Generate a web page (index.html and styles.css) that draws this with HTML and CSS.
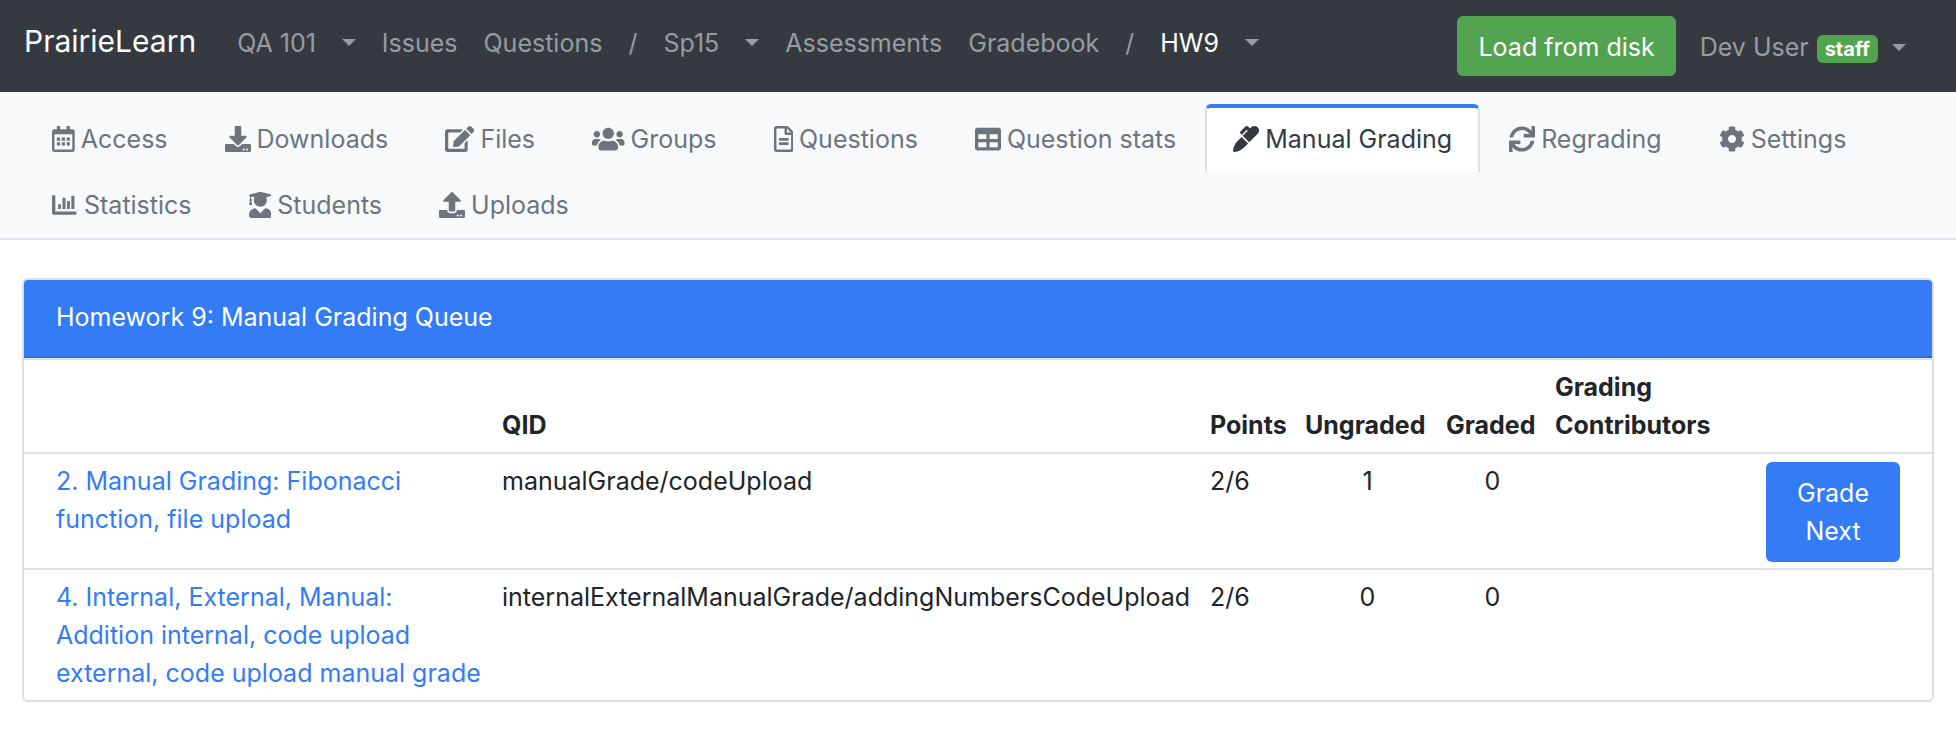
FILE: index.html
```html
<!DOCTYPE html>
<html lang="en">
<head>
<meta charset="utf-8">
<title>Homework 9: Manual Grading Queue</title>
<link rel="stylesheet" href="styles.css">
</head>
<body>
<header class="navbar">
  <a class="brand" href="#">PrairieLearn</a>
  <nav class="nav-main" aria-label="Course">
    <a class="nav-link" href="#">QA 101</a>
    <button class="caret-button" type="button" aria-label="Change course"><span class="caret"></span></button>
    <a class="nav-link" href="#">Issues</a>
    <a class="nav-link" href="#">Questions</a>
    <span class="nav-separator">/</span>
    <a class="nav-link" href="#">Sp15</a>
    <button class="caret-button" type="button" aria-label="Change course instance"><span class="caret"></span></button>
    <a class="nav-link" href="#">Assessments</a>
    <a class="nav-link" href="#">Gradebook</a>
    <span class="nav-separator">/</span>
    <a class="nav-link nav-link-active" href="#">HW9</a>
    <button class="caret-button" type="button" aria-label="Change assessment"><span class="caret"></span></button>
  </nav>
  <div class="nav-user">
    <button class="button button-success" type="button">Load from disk</button>
    <button class="user-menu" type="button">Dev User <span class="badge">staff</span><span class="caret"></span></button>
  </div>
</header>

<nav class="tabs" aria-label="Assessment">
  <a class="tab" href="#"><svg class="icon" viewBox="0 0 448 512" aria-hidden="true"><path d="M96 224h64v64H96zM192 224h64v64h-64zM288 224h64v64h-64zM96 320h64v64H96zM192 320h64v64h-64zM288 320h64v64h-64zM448 112v352c0 26.500-21.500 48-48 48H48c-26.500 0-48-21.500-48-48V112c0-26.500 21.500-48 48-48h48V12c0-6.600 5.400-12 12-12h40c6.600 0 12 5.400 12 12v52h128V12c0-6.600 5.400-12 12-12h40c6.600 0 12 5.400 12 12v52h48c26.500 0 48 21.500 48 48zm-48 346V160H48v298c0 3.300 2.700 6 6 6h340c3.300 0 6-2.700 6-6z"/></svg>Access</a>
  <a class="tab" href="#"><svg class="icon" viewBox="0 0 512 512" aria-hidden="true"><path d="M216 0h80c13.300 0 24 10.700 24 24v168h87.700c17.800 0 26.700 21.500 14.100 34.100L269.700 378.300c-7.500 7.500-19.800 7.500-27.300 0L90.100 226.100c-12.600-12.600-3.700-34.100 14.100-34.100H192V24c0-13.300 10.700-24 24-24zm296 376v112c0 13.300-10.700 24-24 24H24c-13.300 0-24-10.700-24-24V376c0-13.300 10.700-24 24-24h146.700l49 49c20.100 20.100 52.500 20.100 72.600 0l49-49H488c13.300 0 24 10.700 24 24zm-124 88c0-11-9-20-20-20s-20 9-20 20 9 20 20 20 20-9 20-20zm64 0c0-11-9-20-20-20s-20 9-20 20 9 20 20 20 20-9 20-20z"/></svg>Downloads</a>
  <a class="tab" href="#"><svg class="icon" viewBox="0 0 576 512" aria-hidden="true"><path d="M402.600 83.200l90.200 90.200c3.800 3.800 3.800 10 0 13.800L274.400 405.600l-92.800 10.300c-12.400 1.400-22.900-9.100-21.500-21.500l10.300-92.800L388.800 83.200c3.800-3.800 10-3.800 13.800 0zm162-22.900l-48.800-48.800c-15.200-15.200-39.900-15.200-55.200 0l-35.400 35.400c-3.800 3.800-3.800 10 0 13.800l90.200 90.200c3.800 3.800 10 3.800 13.800 0l35.400-35.400c15.200-15.300 15.200-40 0-55.200zM384 346.200V448H64V128h229.800c3.200 0 6.200-1.300 8.500-3.500l40-40c7.600-7.600 2.200-20.500-8.500-20.500H48C21.500 64 0 85.500 0 112v352c0 26.500 21.500 48 48 48h352c26.500 0 48-21.500 48-48V306.200c0-10.700-12.900-16-20.500-8.500l-40 40c-2.200 2.300-3.500 5.300-3.500 8.500z"/></svg>Files</a>
  <a class="tab" href="#"><svg class="icon" viewBox="0 0 640 512" aria-hidden="true"><path d="M96 224c35.300 0 64-28.700 64-64s-28.700-64-64-64-64 28.700-64 64 28.700 64 64 64zm448 0c35.300 0 64-28.700 64-64s-28.700-64-64-64-64 28.700-64 64 28.700 64 64 64zm32 32h-64c-17.600 0-33.500 7.100-45.100 18.600 40.300 22.100 68.900 62 75.100 109.400h66c17.700 0 32-14.300 32-32v-32c0-35.300-28.700-64-64-64zm-256 0c61.900 0 112-50.100 112-112S381.900 32 320 32 208 82.100 208 144s50.100 112 112 112zm76.800 32h-8.300c-20.800 10-43.900 16-68.500 16s-47.600-6-68.500-16h-8.300C179.600 288 128 339.600 128 403.200V432c0 26.500 21.500 48 48 48h288c26.500 0 48-21.500 48-48v-28.800c0-63.600-51.600-115.200-115.200-115.200zm-223.700-13.400C161.500 263.100 145.600 256 128 256H64c-35.300 0-64 28.700-64 64v32c0 17.700 14.300 32 32 32h65.900c6.300-47.400 34.900-87.300 75.200-109.400z"/></svg>Groups</a>
  <a class="tab" href="#"><svg class="icon" viewBox="0 0 384 512" aria-hidden="true"><path d="M288 248v28c0 6.600-5.400 12-12 12H108c-6.600 0-12-5.400-12-12v-28c0-6.600 5.400-12 12-12h168c6.600 0 12 5.400 12 12zm-12 72H108c-6.600 0-12 5.400-12 12v28c0 6.600 5.400 12 12 12h168c6.600 0 12-5.400 12-12v-28c0-6.600-5.400-12-12-12zm108-188.100V464c0 26.500-21.500 48-48 48H48c-26.500 0-48-21.500-48-48V48C0 21.500 21.500 0 48 0h204.100C264.800 0 277 5.100 286 14.100L369.900 98c9 8.900 14.100 21.200 14.100 33.900zm-128-80V128h76.100L256 51.900zM336 464V176H232c-13.300 0-24-10.700-24-24V48H48v416h288z"/></svg>Questions</a>
  <a class="tab" href="#"><svg class="icon" viewBox="0 0 512 512" aria-hidden="true"><path d="M464 32H48C21.490 32 0 53.490 0 80v352c0 26.510 21.490 48 48 48h416c26.510 0 48-21.490 48-48V80c0-26.510-21.490-48-48-48zM224 416H64v-96h160v96zm0-160H64v-96h160v96zm224 160H288v-96h160v96zm0-160H288v-96h160v96z"/></svg>Question stats</a>
  <a class="tab tab-active" href="#" aria-current="page"><svg class="icon" viewBox="0 0 512 512" aria-hidden="true"><path d="M93.950 290.030A327.038 327.038 0 0 0 .17 485.110l-.03.23c-1.700 15.280 11.210 28.200 26.490 26.510a327.020 327.020 0 0 0 195.340-93.800l75.400-75.400-128.020-128.020-75.400 75.400zM485.490 26.510c-35.350-35.350-92.670-35.350-128.020 0l-21.760 21.760-36.560-36.550c-15.620-15.620-40.950-15.620-56.560 0L138.470 115.840c-6.250 6.250-6.250 16.380 0 22.630l22.620 22.620c6.250 6.250 16.380 6.250 22.630 0l87.150-87.150 19.590 19.590L191.980 192 320 320.020l165.490-165.490c35.350-35.350 35.350-92.660 0-128.020z"/></svg>Manual Grading</a>
  <a class="tab" href="#"><svg class="icon" viewBox="0 0 512 512" aria-hidden="true"><path d="M440.650 12.570l4 82.770A247.160 247.160 0 0 0 255.830 8C134.730 8 33.910 94.920 12.290 209.820A12 12 0 0 0 24.090 224h49.050a12 12 0 0 0 11.670-9.260 175.910 175.910 0 0 1 317-56.940l-101.460-4.860a12 12 0 0 0-12.570 12v47.410a12 12 0 0 0 12 12H500a12 12 0 0 0 12-12V12a12 12 0 0 0-12-12h-47.370a12 12 0 0 0-11.980 12.570zM255.830 432a175.610 175.610 0 0 1-146-77.800l101.800 4.870a12 12 0 0 0 12.570-12v-47.400a12 12 0 0 0-12-12H12a12 12 0 0 0-12 12V500a12 12 0 0 0 12 12h47.350a12 12 0 0 0 12-12.600l-4.150-82.570A247.170 247.170 0 0 0 255.830 504c121.110 0 221.930-86.920 243.550-201.820a12 12 0 0 0-11.800-14.180h-49.050a12 12 0 0 0-11.670 9.260A175.860 175.860 0 0 1 255.830 432z"/></svg>Regrading</a>
  <a class="tab" href="#"><svg class="icon" viewBox="0 0 512 512" aria-hidden="true"><path d="M487.400 315.700l-42.600-24.600c4.300-23.200 4.300-47 0-70.200l42.600-24.600c4.900-2.800 7.100-8.600 5.500-14-11.100-35.600-30-67.800-54.700-94.600-3.800-4.100-10-5.100-14.800-2.300L380.800 110c-17.900-15.400-38.500-27.300-60.800-35.100V25.800c0-5.600-3.900-10.500-9.400-11.700-36.700-8.200-74.300-7.800-109.200 0-5.500 1.200-9.400 6.100-9.400 11.700V75c-22.200 7.900-42.800 19.800-60.800 35.100L88.700 85.500c-4.900-2.800-11-1.900-14.800 2.300-24.700 26.700-43.600 58.900-54.700 94.600-1.700 5.400.6 11.200 5.500 14L67.300 221c-4.300 23.200-4.300 47 0 70.200l-42.600 24.600c-4.900 2.800-7.100 8.600-5.500 14 11.100 35.600 30 67.800 54.700 94.600 3.800 4.100 10 5.100 14.800 2.300l42.600-24.600c17.900 15.400 38.500 27.300 60.800 35.100v49.200c0 5.600 3.900 10.500 9.400 11.700 36.700 8.200 74.300 7.800 109.200 0 5.500-1.200 9.400-6.100 9.400-11.700v-49.200c22.200-7.900 42.800-19.800 60.800-35.100l42.600 24.600c4.900 2.800 11 1.900 14.800-2.300 24.700-26.700 43.600-58.900 54.700-94.600 1.500-5.500-.7-11.300-5.600-14.100zM256 336c-44.100 0-80-35.900-80-80s35.900-80 80-80 80 35.900 80 80-35.900 80-80 80z"/></svg>Settings</a>
  <a class="tab" href="#"><svg class="icon" viewBox="0 0 512 512" aria-hidden="true"><path d="M0 76q0-12 12-12h42q12 0 12 12v308h402q12 0 12 12v40q0 12-12 12H28q-28 0-28-28zM120 240h56v96h-56zM206 112h60v224h-60zM296 176h56v160h-56zM382 72h60v264h-60z"/></svg>Statistics</a>
  <a class="tab" href="#"><svg class="icon" viewBox="0 0 448 512" aria-hidden="true"><path d="M319.400 320.600L224 416l-95.400-95.400C57.100 323.700 0 382.200 0 454.400v9.600c0 26.500 21.500 48 48 48h352c26.500 0 48-21.500 48-48v-9.600c0-72.200-57.100-130.700-128.600-133.800zM13.600 79.800l6.400 1.500v58.400c-7 4.200-12 11.500-12 20.300 0 8.400 4.600 15.400 11.100 19.700L3.500 242c-1.700 6.900 2.100 14 7.600 14h41.800c5.500 0 9.300-7.100 7.600-14l-15.600-62.300C51.400 175.400 56 168.400 56 160c0-8.800-5-16.100-12-20.300V87.100l66 15.900c-8.600 17.200-14 36.400-14 57 0 70.700 57.300 128 128 128s128-57.300 128-128c0-20.600-5.300-39.800-14-57l96.300-23.200c18.200-4.400 18.200-27.100 0-31.500l-190.400-46c-13-3.100-26.700-3.100-39.700 0L13.600 48.200c-18.100 4.400-18.100 27.100 0 31.600z"/></svg>Students</a>
  <a class="tab" href="#"><svg class="icon" viewBox="0 0 512 512" aria-hidden="true"><path d="M296 384h-80c-13.300 0-24-10.700-24-24V192h-87.700c-17.800 0-26.700-21.500-14.100-34.100L242.300 5.700c7.500-7.500 19.800-7.500 27.300 0l152.200 152.200c12.600 12.600 3.700 34.100-14.100 34.100H320v168c0 13.300-10.700 24-24 24zm216-8v112c0 13.300-10.700 24-24 24H24c-13.300 0-24-10.700-24-24V376c0-13.300 10.700-24 24-24h136v8c0 30.900 25.100 56 56 56h80c30.900 0 56-25.100 56-56v-8h136c13.300 0 24 10.700 24 24zm-124 88c0-11-9-20-20-20s-20 9-20 20 9 20 20 20 20-9 20-20zm64 0c0-11-9-20-20-20s-20 9-20 20 9 20 20 20 20-9 20-20z"/></svg>Uploads</a>
</nav>

<main class="content">
  <section class="card">
    <h1 class="card-header">Homework 9: Manual Grading Queue</h1>
    <table class="queue">
      <colgroup>
        <col class="col-question">
        <col class="col-qid">
        <col class="col-points">
        <col class="col-ungraded">
        <col class="col-graded">
        <col class="col-contributors">
        <col class="col-action">
      </colgroup>
      <thead>
        <tr>
          <td></td>
          <th scope="col">QID</th>
          <th scope="col">Points</th>
          <th scope="col">Ungraded</th>
          <th scope="col">Graded</th>
          <th scope="col">Grading Contributors</th>
          <td></td>
        </tr>
      </thead>
      <tbody>
        <tr>
          <td><a class="question-link" href="#">2. Manual Grading: Fibonacci function, file upload</a></td>
          <td>manualGrade/codeUpload</td>
          <td>2/6</td>
          <td class="count">1</td>
          <td class="count">0</td>
          <td></td>
          <td class="action"><button class="button button-primary" type="button">Grade Next</button></td>
        </tr>
        <tr>
          <td><a class="question-link" href="#">4. Internal, External, Manual: Addition internal, code upload external, code upload manual grade</a></td>
          <td>internalExternalManualGrade/addingNumbersCodeUpload</td>
          <td>2/6</td>
          <td class="count">0</td>
          <td class="count">0</td>
          <td></td>
          <td></td>
        </tr>
      </tbody>
    </table>
  </section>
</main>
</body>
</html>
```

FILE: styles.css
```css
*,
*::before,
*::after {
  box-sizing: border-box;
}

body {
  margin: 0;
  background: #fff;
  color: #212529;
  font-family: Inter, "Liberation Sans", sans-serif;
  font-size: 25px;
  line-height: 38px;
}

a {
  color: inherit;
  text-decoration: none;
}

button {
  border: 0;
  background: none;
  color: inherit;
  font: inherit;
  cursor: pointer;
}

/* Top bar */

.navbar {
  display: flex;
  align-items: flex-start;
  padding: 16px 50px 16px 24px;
  background: #343a40;
  color: #999c9f;
}

.brand {
  margin-right: 41px;
  padding: 6px 0;
  color: #fff;
  font-size: 30px;
  white-space: nowrap;
}

.nav-main {
  display: flex;
  align-items: center;
  gap: 26px;
  padding-top: 8px;
  line-height: 38px;
}

.nav-link,
.nav-separator {
  white-space: nowrap;
}

.nav-link-active {
  color: #fff;
}

.caret-button {
  display: flex;
  padding: 12px 0 14px;
}

.caret {
  display: inline-block;
  border: 7px solid transparent;
  border-top-color: currentColor;
  border-bottom: 0;
}

.nav-user {
  display: flex;
  align-items: center;
  gap: 24px;
  margin-left: auto;
}

.button {
  border-radius: 6px;
  color: #fff;
}

.button-success {
  padding: 12px 21px 10px;
  background: #53a451;
  white-space: nowrap;
}

.button-primary {
  width: 100%;
  padding: 12px 20px;
  background: #347cf6;
}

.user-menu {
  display: flex;
  align-items: center;
  gap: 8px;
  padding: 2px 0 0;
  white-space: nowrap;
}

.badge {
  margin: 4px 6px 0 0;
  padding: 0 8px;
  border-radius: 6px;
  background: #53a451;
  color: #fff;
  font-size: 20px;
  font-weight: 700;
  line-height: 28px;
}

/* Tab strip */

.tabs {
  display: flex;
  flex-wrap: wrap;
  column-gap: 1px;
  padding: 12px 24px 2px;
  border-bottom: 2px solid #dfe2e9;
  background: #f8f9fb;
  color: #6c757d;
}

.tab {
  display: flex;
  align-items: center;
  gap: 6px;
  margin-bottom: -2px;
  padding: 12px 26px 14px;
  border: 2px solid transparent;
  border-top-width: 4px;
  border-bottom: 0;
  border-radius: 6px 6px 0 0;
  white-space: nowrap;
}

.tab-active {
  border-color: #347cf6 #dee2e6;
  background: #fff;
  color: #343a40;
}

.icon {
  flex: none;
  height: 26px;
  fill: currentColor;
}

/* Grading queue */

.content {
  padding: 38px 22px;
}

.card {
  overflow: hidden;
  border: 2px solid #dfdfdf;
  border-radius: 6px;
}

.card-header {
  margin: 0;
  padding: 18px 32px 20px;
  border-bottom: 2px solid #2e6dd6;
  background: #347cf6;
  color: #fff;
  font-size: 25px;
  font-weight: 400;
}

.queue {
  width: 100%;
  border-collapse: separate;
  border-spacing: 0;
  table-layout: fixed;
}

.queue th,
.queue td {
  padding: 8px;
  border-top: 2px solid #dee2e6;
  text-align: left;
  vertical-align: top;
}

.queue th {
  font-weight: 700;
  vertical-align: bottom;
}

.queue tr > :first-child {
  padding-left: 32px;
}

.queue tr > :last-child {
  padding-right: 32px;
}

.queue .count {
  text-align: center;
}

.queue .action {
  padding-bottom: 6px;
}

.col-qid { width: 708px; }
.col-points { width: 95px; }
.col-ungraded { width: 141px; }
.col-graded { width: 109px; }
.col-contributors { width: 211px; }
.col-action { width: 174px; }

.question-link {
  color: #347cf6;
}
```
